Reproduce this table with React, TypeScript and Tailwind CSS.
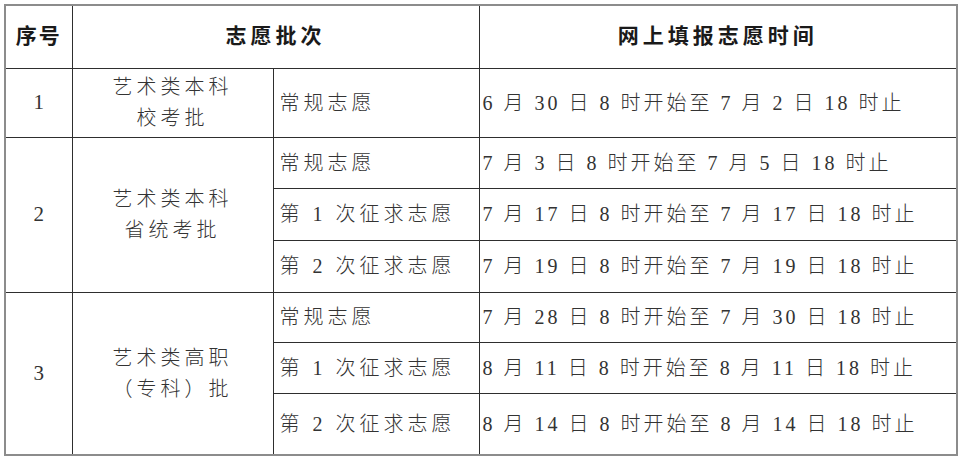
const FONT = "font-['Liberation_Serif','Noto_Sans_CJK_SC',serif]";

type Sub = { name: string; time: string; h: string };
type Group = { no: string; lines: string[]; subs: Sub[] };

const GROUPS: Group[] = [
  {
    no: "1",
    lines: ["艺术类本科", "校考批"],
    subs: [{ name: "常规志愿", time: "6 月 30 日 8 时开始至 7 月 2 日 18 时止", h: "h-[69px]" }],
  },
  {
    no: "2",
    lines: ["艺术类本科", "省统考批"],
    subs: [
      { name: "常规志愿", time: "7 月 3 日 8 时开始至 7 月 5 日 18 时止", h: "h-[51px]" },
      { name: "第 1 次征求志愿", time: "7 月 17 日 8 时开始至 7 月 17 日 18 时止", h: "h-[52px]" },
      { name: "第 2 次征求志愿", time: "7 月 19 日 8 时开始至 7 月 19 日 18 时止", h: "h-[52px]" },
    ],
  },
  {
    no: "3",
    lines: ["艺术类高职", "（专科）批"],
    subs: [
      { name: "常规志愿", time: "7 月 28 日 8 时开始至 7 月 30 日 18 时止", h: "h-[50px]" },
      { name: "第 1 次征求志愿", time: "8 月 11 日 8 时开始至 8 月 11 日 18 时止", h: "h-[51px]" },
      { name: "第 2 次征求志愿", time: "8 月 14 日 8 时开始至 8 月 14 日 18 时止", h: "h-[62px]" },
    ],
  },
];

const cell = "border border-[#2e2e2e] p-0";

export default function App() {
  return (
    <div className={`w-[960px] h-[460px] bg-white pt-[4px] pl-[4px] ${FONT}`}>
      <table className="table-fixed border-collapse w-[952px] border-2 border-[#8c8c8c]">
        <colgroup>
          <col className="w-[67px]" />
          <col className="w-[201px]" />
          <col className="w-[206px]" />
          <col className="w-[478px]" />
        </colgroup>
        <thead>
          <tr className="h-[63px]">
            <th className={`${cell} text-[21px] font-bold text-[#1a1a1a] tracking-[2px]`}>序号</th>
            <th colSpan={2} className={`${cell} text-[21px] font-bold text-[#1a1a1a] tracking-[4px]`}>
              志愿批次
            </th>
            <th className={`${cell} text-[21px] font-bold text-[#1a1a1a] tracking-[4px]`}>网上填报志愿时间</th>
          </tr>
        </thead>
        <tbody className="text-[20px] font-light text-[#333] leading-none">
          {GROUPS.map((g) =>
            g.subs.map((s, i) => (
              <tr key={g.no + i} className={s.h}>
                {i === 0 && (
                  <>
                    <td rowSpan={g.subs.length} className={`${cell} text-center text-[21px]`}>
                      {g.no}
                    </td>
                    <td rowSpan={g.subs.length} className={`${cell} text-center tracking-[4px]`}>
                      <div className="flex flex-col items-center gap-[11px]">
                        {g.lines.map((l) => (
                          <span key={l} className="whitespace-nowrap">
                            {l}
                          </span>
                        ))}
                      </div>
                    </td>
                  </>
                )}
                <td className={`${cell} pl-[6px] tracking-[4px] whitespace-nowrap`}>{s.name}</td>
                <td className={`${cell} pl-[3px] tracking-[3px] whitespace-nowrap`}>{s.time}</td>
              </tr>
            ))
          )}
        </tbody>
      </table>
    </div>
  );
}
